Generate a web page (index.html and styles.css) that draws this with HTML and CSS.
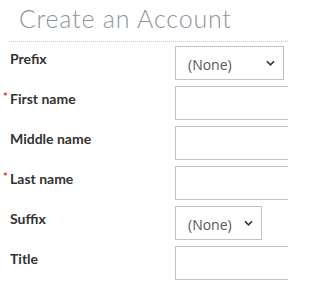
FILE: index.html
```html
<!DOCTYPE html>
<html>
<head>
<meta charset="utf-8">
<link rel="stylesheet" href="styles.css">
</head>
<body>
<div class="page">
  <h1 class="title">Create an Account</h1>
  <form class="form">
    <div class="row">
      <label class="label">Prefix</label>
      <div class="control"><div class="select select-wide"><span>(None)</span><svg class="chev" viewBox="0 0 10 6" width="9" height="6"><path d="M1 1 L5 5 L9 1" fill="none" stroke="#333" stroke-width="1.8"/></svg></div></div>
    </div>
    <div class="row">
      <label class="label required">First name</label>
      <div class="control"><div class="input"></div></div>
    </div>
    <div class="row">
      <label class="label">Middle name</label>
      <div class="control"><div class="input"></div></div>
    </div>
    <div class="row">
      <label class="label required">Last name</label>
      <div class="control"><div class="input"></div></div>
    </div>
    <div class="row">
      <label class="label">Suffix</label>
      <div class="control"><div class="select select-narrow"><span>(None)</span><svg class="chev" viewBox="0 0 10 6" width="9" height="6"><path d="M1 1 L5 5 L9 1" fill="none" stroke="#333" stroke-width="1.8"/></svg></div></div>
    </div>
    <div class="row">
      <label class="label">Title</label>
      <div class="control"><div class="input"></div></div>
    </div>
  </form>
</div>
</body>
</html>
```

FILE: styles.css
```css
html, body {
  margin: 0;
  padding: 0;
  background: #fff;
  overflow: hidden;
}
.page {
  width: 288px;
  height: 288px;
  box-sizing: border-box;
  padding-left: 9px;
  overflow: hidden;
}
.title {
  margin: 0;
  height: 42px;
  box-sizing: border-box;
  padding: 2px 0 0 10px;
  font-family: Lato, "Open Sans", sans-serif;
  font-weight: 300;
  font-size: 25px;
  line-height: 32px;
  color: #8e939a;
  border-bottom: 1px dotted #c8c8c8;
  letter-spacing: 0.8px;
  white-space: nowrap;
}
.form {
  display: flex;
  flex-direction: column;
  gap: 6px;
  padding-top: 4px;
}
.row {
  display: flex;
  height: 34px;
}
.label {
  position: relative;
  width: 166px;
  flex: none;
  padding: 4px 0 0 1px;
  box-sizing: border-box;
  font-family: Lato, "Open Sans", sans-serif;
  font-weight: 700;
  font-size: 14px;
  line-height: 18px;
  color: #333;
}
.required::before {
  content: "*";
  position: absolute;
  left: -6px;
  top: 2px;
  color: #e02b27;
  font-size: 11px;
  font-weight: 700;
}
.control {
  flex: 1;
  display: flex;
  min-width: 0;
}
.input {
  flex: none;
  width: 200px;
  height: 34px;
  box-sizing: border-box;
  border: 1px solid #c2c2c2;
  background: #fff;
}
.select {
  flex: none;
  height: 34px;
  box-sizing: border-box;
  border: 1px solid #c2c2c2;
  background: #fff;
  display: flex;
  align-items: center;
  justify-content: space-between;
  padding: 3px 8px 0 12px;
  font-family: "Open Sans", sans-serif;
  font-size: 14px;
  color: #5e5750;
}
.select-wide { width: 109px; }
.select-narrow { width: 87px; }
.chev { margin-top: -3px; }
```
